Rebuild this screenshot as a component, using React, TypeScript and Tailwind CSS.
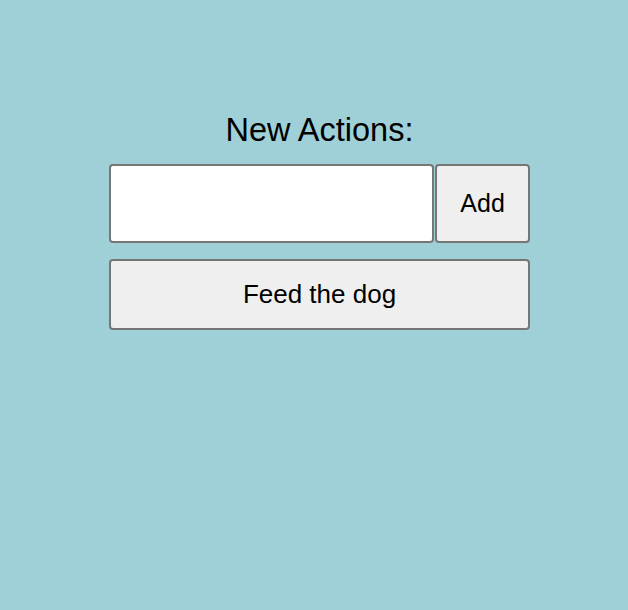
import React from "react";

export default function App() {
  return (
    <div
      className="w-[628px] h-[610px] bg-[#9fd0d7] pt-[113px] pl-[109px]"
      style={{ fontFamily: '"Liberation Sans", Arial, sans-serif' }}
    >
      <div className="w-[421px] flex flex-col">
        <div className="text-center text-[32.5px] leading-[34px] text-black">New Actions:</div>
        <div className="flex mt-[17px] h-[79px]">
          <input
            type="text"
            className="w-[326px] h-full bg-white border-2 border-[#767676] rounded-[4px] outline-none"
          />
          <button className="w-[95px] h-full ml-px bg-[#efefef] border-2 border-[#767676] rounded-[4px] text-[25px] text-black">
            Add
          </button>
        </div>
        <button className="mt-[16px] w-full h-[71px] bg-[#efefef] border-2 border-[#767676] rounded-[4px] text-[26px] text-black">
          Feed the dog
        </button>
      </div>
    </div>
  );
}
